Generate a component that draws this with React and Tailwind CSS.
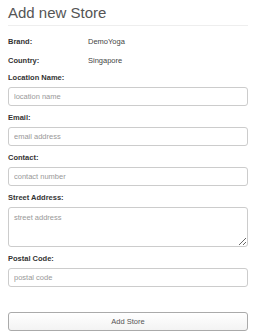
import { useState } from "react";

function Field({ label, placeholder, multiline }) {
  const [value, setValue] = useState("");
  return (
    <div className="flex flex-col">
      <label className="font-bold text-[#333] leading-[10px] mb-[4px]">{label}</label>
      {multiline ? (
        <textarea
          value={value}
          onChange={(e) => setValue(e.target.value)}
          placeholder={placeholder}
          className="h-[40px] px-[5px] py-[4px] border border-[#ccc] rounded-[3px] placeholder:text-[#999] outline-none resize-y"
        />
      ) : (
        <input
          value={value}
          onChange={(e) => setValue(e.target.value)}
          placeholder={placeholder}
          className="h-[19px] px-[5px] border border-[#ccc] rounded-[3px] placeholder:text-[#999] outline-none"
        />
      )}
    </div>
  );
}

export default function App() {
  return (
    <div className="w-[256px] h-[336px] bg-white px-2 text-[7.5px] text-[#333] font-['Liberation_Sans',Arial,sans-serif]">
      <h1 className="pt-[3px] text-[15px] leading-[20px] text-[#555]">Add new Store</h1>
      <hr className="mt-[2px] border-t border-[#eee]" />

      <div className="mt-[11px] flex flex-col gap-[9px]">
        <div className="flex items-center h-[10px]">
          <span className="w-[80px] font-bold">Brand:</span>
          <span className="text-[#444]">DemoYoga</span>
        </div>
        <div className="flex items-center h-[10px]">
          <span className="w-[80px] font-bold">Country:</span>
          <span className="text-[#444]">Singapore</span>
        </div>
      </div>

      <div className="mt-[7px] flex flex-col gap-[7px]">
        <Field label="Location Name:" placeholder="location name" />
        <Field label="Email:" placeholder="email address" />
        <Field label="Contact:" placeholder="contact number" />
        <Field label="Street Address:" placeholder="street address" multiline />
        <Field label="Postal Code:" placeholder="postal code" />
      </div>

      <button className="mt-[25px] w-full h-[19px] border border-[#aaa] rounded-[3px] bg-gradient-to-b from-white to-[#f3f3f3] text-[#555]">
        Add Store
      </button>
    </div>
  );
}
